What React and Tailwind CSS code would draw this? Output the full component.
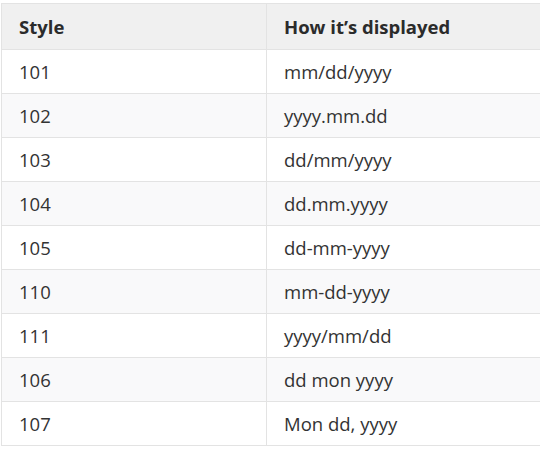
const rows = [
  ['101', 'mm/dd/yyyy'],
  ['102', 'yyyy.mm.dd'],
  ['103', 'dd/mm/yyyy'],
  ['104', 'dd.mm.yyyy'],
  ['105', 'dd-mm-yyyy'],
  ['110', 'mm-dd-yyyy'],
  ['111', 'yyyy/mm/dd'],
  ['106', 'dd mon yyyy'],
  ['107', 'Mon dd, yyyy'],
];

export default function App() {
  return (
    <div
      className="w-[540px] h-[449px] overflow-hidden bg-white pt-[3px] pl-[1px]"
      style={{ fontFamily: '"Open Sans", "Noto Sans", sans-serif' }}
    >
      <table className="w-[580px] border-collapse text-[18.5px] text-[#333]">
        <thead>
          <tr className="h-[46px] bg-[#f0f0f0] border border-[#e3e3e3]">
            <th className="w-[265px] pl-[17px] text-left font-bold text-[#2b2b2b] border-r border-[#e3e3e3]">Style</th>
            <th className="pl-[17px] text-left font-bold text-[#2b2b2b]">How it’s displayed</th>
          </tr>
        </thead>
        <tbody>
          {rows.map(([style, fmt], i) => (
            <tr
              key={style}
              className={`h-[44px] border border-[#e3e3e3] ${i % 2 === 1 ? 'bg-[#f9f9fa]' : 'bg-white'}`}
            >
              <td className="pl-[17px] border-r border-[#e3e3e3]">{style}</td>
              <td className="pl-[17px]">{fmt}</td>
            </tr>
          ))}
        </tbody>
      </table>
    </div>
  );
}
